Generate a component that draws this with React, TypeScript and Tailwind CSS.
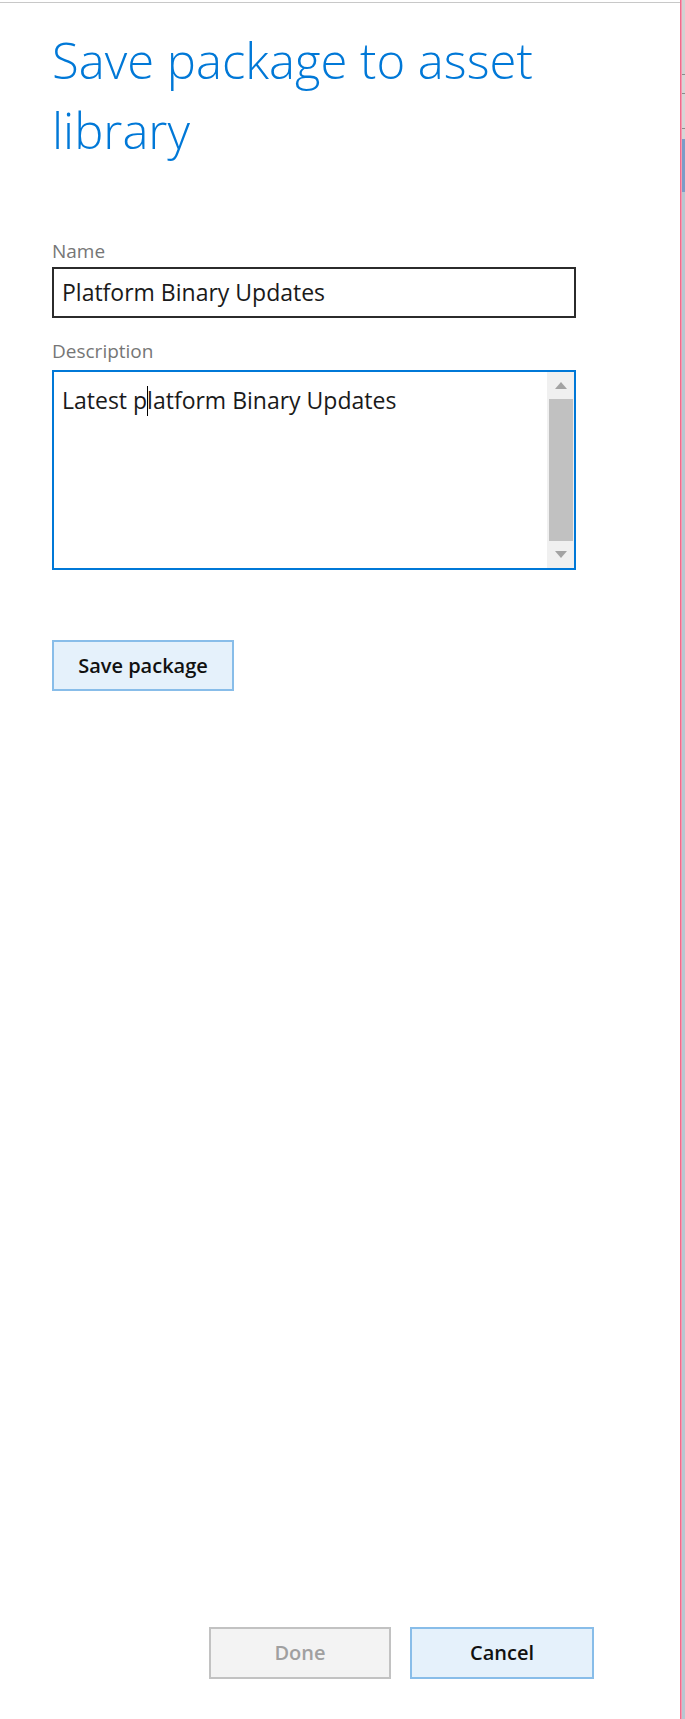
export default function App() {
  return (
    <div className="flex h-[1719px] w-[685px] overflow-hidden bg-white font-['Open_Sans','Noto_Sans',sans-serif]">
      <div className="flex w-[680px] flex-col pt-[2px]">
        <div className="flex flex-1 flex-col border-t border-[#c8c8c8] pl-[52px]">
          <h1 className="mt-[22px] w-[525px] text-[49px] font-light leading-[70px] text-[#0078d7]">
            Save package to asset library
          </h1>

          <label className="mt-[74px] text-[19px] leading-[24px] text-[#767676]">Name</label>
          <div className="mt-[4px] flex h-[51px] w-[524px] items-center border-2 border-[#2b2b2b] pl-[8px] text-[23px] text-[#1a1a1a]">
            Platform Binary Updates
          </div>

          <label className="mt-[21px] text-[19px] leading-[24px] text-[#767676]">Description</label>
          <div className="mt-[7px] flex h-[200px] w-[524px] border-2 border-[#0078d7]">
            <div className="flex-1 pl-[8px] pt-[12px] text-[23px] leading-[32px] text-[#1a1a1a]">
              Latest p
              <span className="relative">
                <span className="absolute left-0 top-[2px] h-[30px] w-px bg-black" />
              </span>
              latform Binary Updates
            </div>
            <div className="flex w-[27px] flex-col items-center bg-[#f0f0f0]">
              <div className="flex h-[27px] w-full items-center justify-center">
                <svg width="12" height="7" viewBox="0 0 12 7"><polygon points="6,0 12,7 0,7" fill="#a3a3a3" /></svg>
              </div>
              <div className="ml-[1px] w-[24px] flex-1 bg-[#c1c1c1]" />
              <div className="flex h-[27px] w-full items-center justify-center">
                <svg width="12" height="7" viewBox="0 0 12 7"><polygon points="0,0 12,0 6,7" fill="#a3a3a3" /></svg>
              </div>
            </div>
          </div>

          <button className="mt-[70px] h-[51px] w-[182px] border-2 border-[#88bde9] bg-[#e5f1fb] text-[20px] font-semibold text-[#111]">
            Save package
          </button>

          <div className="mb-[40px] mt-auto flex gap-[19px] pl-[157px]">
            <button className="h-[52px] w-[182px] border-2 border-[#c2c2c2] bg-[#f3f3f3] text-[20px] font-semibold text-[#a0a0a0]">
              Done
            </button>
            <button className="h-[52px] w-[184px] border-2 border-[#88bde9] bg-[#e5f1fb] text-[20px] font-semibold text-[#111]">
              Cancel
            </button>
          </div>
        </div>
      </div>
      <div className="w-[1px] bg-[#f06a8c]" />
      <div className="w-[1px] bg-[#f59ab0]" />
      <div className="flex w-[3px] flex-col">
        <div className="h-[74px] bg-[#d2d2d2]" />
        <div className="h-[1px] bg-[#8a8a8a]" />
        <div className="h-[18px] bg-[#d6d6d6]" />
        <div className="h-[1px] bg-[#8a8a8a]" />
        <div className="h-[34px] bg-[#d6d6d6]" />
        <div className="h-[1px] bg-[#8a8a8a]" />
        <div className="h-[10px] bg-[#d6d6d6]" />
        <div className="h-[53px] bg-[#7b9cc7]" />
        <div className="flex-1 bg-[#b7c7d1]" />
      </div>
    </div>
  );
}
